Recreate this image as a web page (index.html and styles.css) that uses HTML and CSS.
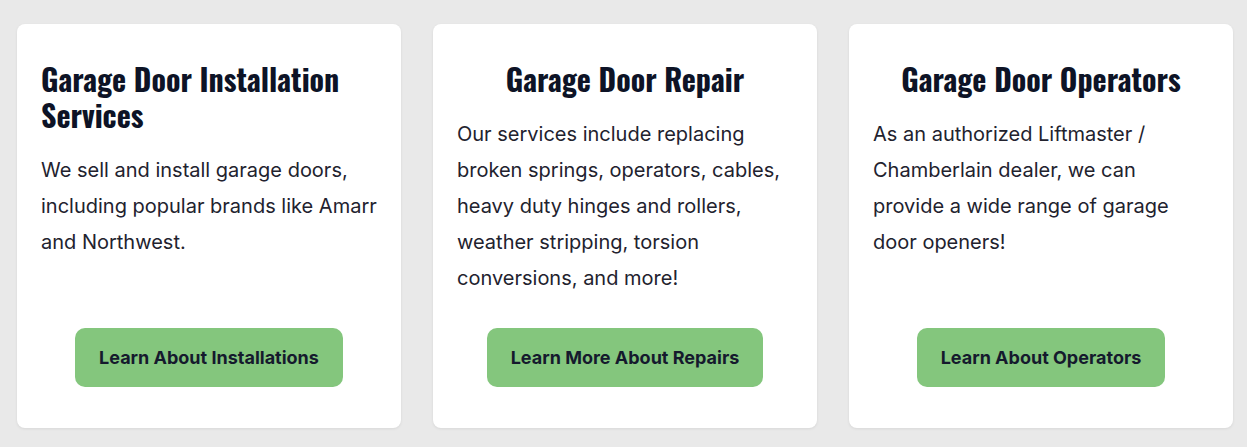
FILE: index.html
```html
<!DOCTYPE html>
<html lang="en">
<head>
<meta charset="utf-8">
<title>Garage Door Services</title>
<link rel="stylesheet" href="styles.css">
</head>
<body>
<main class="cards">
  <section class="card">
    <h2 class="card-title card-title-left">Garage Door Installation Services</h2>
    <p class="card-text">We sell and install garage doors, including popular brands like Amarr and Northwest.</p>
    <a class="card-btn" href="#">Learn About Installations</a>
  </section>
  <section class="card">
    <h2 class="card-title">Garage Door Repair</h2>
    <p class="card-text">Our services include replacing broken springs, operators, cables, heavy duty hinges and rollers, weather stripping, torsion conversions, and more!</p>
    <a class="card-btn" href="#">Learn More About Repairs</a>
  </section>
  <section class="card">
    <h2 class="card-title">Garage Door Operators</h2>
    <p class="card-text">As an authorized Liftmaster / Chamberlain dealer, we can provide a wide range of garage door openers!</p>
    <a class="card-btn" href="#">Learn About Operators</a>
  </section>
</main>
</body>
</html>
```
FILE: styles.css
```css
html, body {
  margin: 0;
  padding: 0;
}
body {
  background: #e9e9e9;
  font-family: Inter, "Liberation Sans", sans-serif;
}
.cards {
  display: grid;
  grid-template-columns: repeat(3, 384px);
  column-gap: 32px;
  padding: 24px 0 19px 17px;
}
.card {
  background: #ffffff;
  border-radius: 8px;
  box-shadow: 0 1px 3px rgba(0, 0, 0, 0.08);
  padding: 37px 24px 41px;
  display: flex;
  flex-direction: column;
  height: 404px;
  box-sizing: border-box;
}
.card-title {
  margin: 0 0 19px;
  font-family: "Oswald", "Noto Sans", sans-serif;
  font-weight: 700;
  font-size: 30px;
  line-height: 36px;
  color: #0d1326;
  text-align: center;
}
.card-title-left {
  text-align: left;
}
.card-text {
  margin: 0;
  font-size: 20px;
  line-height: 36px;
  color: #22222e;
}
.card-btn {
  margin-top: auto;
  align-self: center;
  background: #84c67d;
  color: #151a2d;
  text-decoration: none;
  font-weight: 700;
  font-size: 18px;
  line-height: 23px;
  padding: 18px 24px;
  border-radius: 10px;
}
```
